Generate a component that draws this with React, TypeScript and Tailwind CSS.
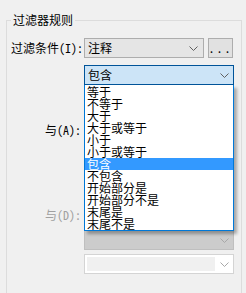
import React from 'react';

const items = [
  '等于',
  '不等于',
  '大于',
  '大于或等于',
  '小于',
  '小于或等于',
  '包含',
  '不包含',
  '开始部分是',
  '开始部分不是',
  '末尾是',
  '末尾不是',
];

function Chevron({ color = '#606060' }: { color?: string }) {
  return (
    <svg width="9" height="5" viewBox="0 0 9 5" className="shrink-0">
      <polyline points="0.5,0.5 4.5,4.5 8.5,0.5" fill="none" stroke={color} strokeWidth="1" />
    </svg>
  );
}

export default function App() {
  const selected = '包含';

  return (
    <div className="w-[246px] h-[293px] bg-[#f0f0f0] overflow-hidden text-[12px] text-black font-['Noto_Sans_CJK_SC',sans-serif] [font-feature-settings:'hwid']">
      <fieldset className="ml-[6px] mt-[13px] w-[236px] h-[300px] border border-[#dcdcdc] px-[4px] pt-[11px]">
        <legend className="px-[2px] leading-[14px]">过滤器规则</legend>

        {/* Row: filter condition */}
        <div className="flex items-center h-[20px]">
          <label className="w-[73px] text-right pr-[3px] leading-[20px] whitespace-nowrap">过滤条件(I):</label>
          <div className="w-[120px] h-[20px] border border-[#adadad] bg-[#e5e5e5] flex items-center justify-between pl-[3px] pr-[5px]">
            <span className="leading-[18px]">注释</span>
            <Chevron />
          </div>
          <button className="ml-[4px] w-[25px] h-[20px] border border-[#adadad] bg-[#e1e1e1] flex items-center justify-center tracking-[2px] leading-[18px]">
            ...
          </button>
        </div>

        {/* Row: operator, open dropdown */}
        <div className="mt-[7px] ml-[73px] relative w-[150px]">
          <div className="h-[20px] border border-[#005499] bg-[#cce4f7] flex items-center justify-between pl-[3px] pr-[4px]">
            <span className="leading-[18px]">包含</span>
            <Chevron />
          </div>
          <ul className="absolute left-0 top-full z-10 w-[150px] bg-white border border-t-0 border-[#0078d7] shadow-[3px_3px_3px_rgba(0,0,0,0.3)] pt-[1px]">
            {items.map((it) => (
              <li
                key={it}
                className={
                  it === selected
                    ? 'h-[12px] leading-[12px] pl-[2px] bg-[#3399ff] text-white whitespace-nowrap'
                    : 'h-[12px] leading-[12px] pl-[2px] whitespace-nowrap'
                }
              >
                {it}
              </li>
            ))}
          </ul>
        </div>

        {/* Row: and (A) */}
        <div className="mt-[35px] flex items-center h-[20px]">
          <label className="w-[73px] text-right pr-[3px] leading-[20px]">与(A):</label>
          <div className="w-[150px] h-[20px] border border-[#adadad] bg-white" />
        </div>

        {/* Row: and (D) */}
        <div className="mt-[65px] flex items-center h-[20px]">
          <label className="w-[73px] text-right pr-[3px] leading-[20px] text-[#a0a0a0]">与(D):</label>
          <div className="w-[150px] h-[20px] border border-[#bfbfbf] bg-[#cccccc]" />
        </div>

        <div className="mt-[5px] ml-[73px] w-[150px] h-[20px] border border-[#bfbfbf] bg-[#cccccc] flex items-center justify-end pr-[4px]">
          <Chevron color="#a8a8a8" />
        </div>

        <div className="mt-[4px] ml-[73px] w-[150px] h-[20px] border border-[#d4d4d4] bg-white flex items-center pl-[2px] pr-[4px]">
          <div className="w-[128px] h-[14px] bg-[#f0f0f0]" />
          <div className="flex-1" />
          <Chevron color="#a8a8a8" />
        </div>
      </fieldset>
    </div>
  );
}
